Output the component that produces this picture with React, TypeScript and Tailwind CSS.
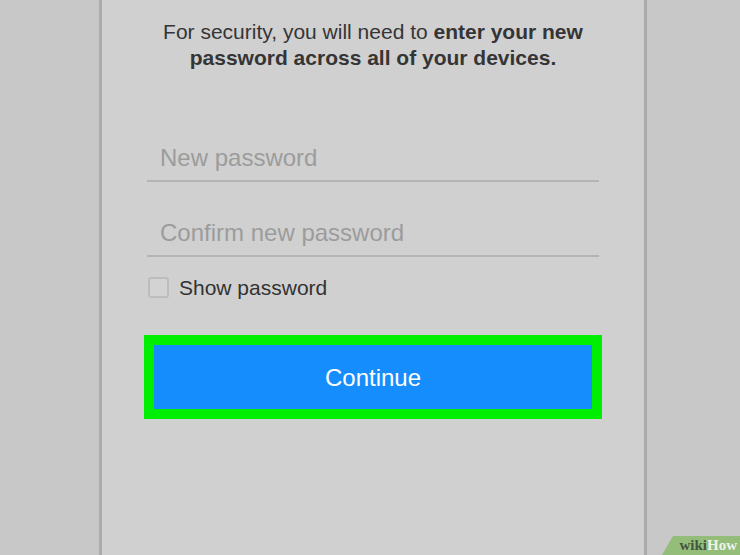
export default function App() {
  return (
    <div
      className="flex h-[555px] w-[740px] overflow-hidden bg-[#c8c8c8] pl-[99px]"
      style={{ fontFamily: '"Liberation Sans", Arial, sans-serif' }}
    >
      <div className="relative flex h-full w-[548px] flex-col border-x-[3px] border-[#ababab] bg-[#d0d0d0] px-[45px]">
        <p className="mt-[19px] text-center text-[21px] leading-[26px] text-[#353535]">
          For security, you will need to <b>enter your new password across all of your devices.</b>
        </p>

        <div className="mt-[36px] flex h-[75px] items-end border-b-2 border-[#b4b4b4] pb-[8px] pl-[13px]">
          <span className="text-[24px] leading-[28px] text-[#9c9c9c]">New password</span>
        </div>
        <div className="flex h-[75px] items-end border-b-2 border-[#b4b4b4] pb-[8px] pl-[13px]">
          <span className="text-[24px] leading-[28px] text-[#9c9c9c]">Confirm new password</span>
        </div>

        <label className="mt-[15px] flex items-center gap-[10px] pl-[1px]">
          <span className="h-[21px] w-[21px] rounded-[3px] border-2 border-[#bdbdbd] bg-[#d3d3d3]" />
          <span className="text-[21px] text-[#333333]">Show password</span>
        </label>

        <div className="mt-[31px] -mx-[3px] border-[10px] border-[#00ee00]">
          <button className="flex h-[64px] w-full items-center justify-center bg-[#168dfd] pt-[3px] text-[24px] text-white">
            Continue
          </button>
        </div>
      </div>

      <div className="absolute bottom-0 right-0 flex h-[19px] w-[78px] items-center justify-end bg-[#93bd78] pr-[3px] [clip-path:polygon(14%_0,100%_0,100%_100%,0_100%)]">
        <span
          className="text-[15px] font-bold leading-none text-[#47543f]"
          style={{ fontFamily: '"Liberation Serif", "Times New Roman", serif' }}
        >
          wiki<span className="text-[#eef3ea]">How</span>
        </span>
      </div>
    </div>
  );
}
